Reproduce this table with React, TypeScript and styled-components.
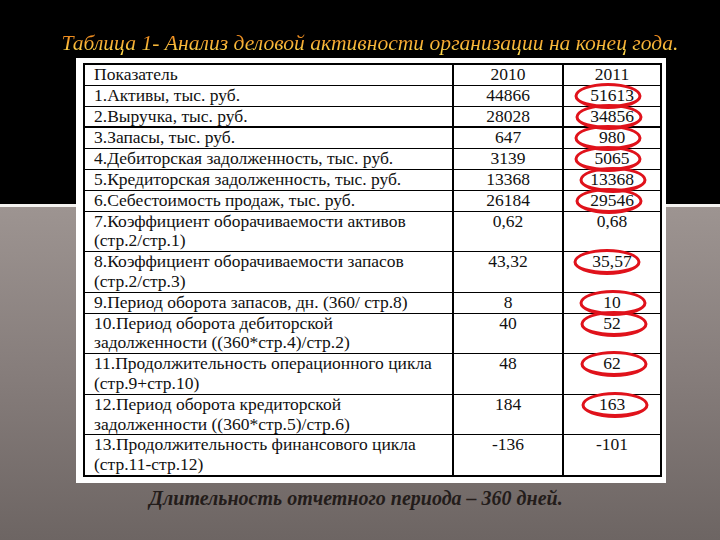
import React from 'react';
import styled, { createGlobalStyle } from 'styled-components';

type Row = { label: string[]; a: string; b: string; mark?: boolean; shift?: number; thick?: boolean };

const rows: Row[] = [
  { label: ['Показатель'], a: '2010', b: '2011' },
  { label: ['1.Активы, тыс. руб.'], a: '44866', b: '51613', mark: true, shift: -4 },
  { label: ['2.Выручка, тыс. руб.'], a: '28028', b: '34856', mark: true, shift: -3, thick: true },
  { label: ['3.Запасы, тыс. руб.'], a: '647', b: '980', mark: true, shift: -4 },
  { label: ['4.Дебиторская задолженность, тыс. руб.'], a: '3139', b: '5065', mark: true, shift: -4 },
  { label: ['5.Кредиторская задолженность, тыс. руб.'], a: '13368', b: '13368', mark: true, shift: 1 },
  { label: ['6.Себестоимость продаж, тыс. руб.'], a: '26184', b: '29546', mark: true, shift: -3 },
  { label: ['7.Коэффициент оборачиваемости активов', '(стр.2/стр.1)'], a: '0,62', b: '0,68' },
  { label: ['8.Коэффициент оборачиваемости  запасов', '(стр.2/стр.3)'], a: '43,32', b: '35,57', mark: true, shift: -5 },
  { label: ['9.Период оборота запасов, дн. (360/ стр.8)'], a: '8', b: '10', mark: true, shift: 1 },
  { label: ['10.Период оборота дебиторской', 'задолженности ((360*стр.4)/стр.2)'], a: '40', b: '52', mark: true, shift: 2 },
  { label: ['11.Продолжительность операционного цикла', '(стр.9+стр.10)'], a: '48', b: '62', mark: true, shift: 2 },
  { label: ['12.Период оборота кредиторской', 'задолженности ((360*стр.5)/стр.6)'], a: '184', b: '163', mark: true, shift: 3 },
  { label: ['13.Продолжительность финансового цикла', '(стр.11-стр.12)'], a: '-136', b: '-101' },
];

const GlobalStyle = createGlobalStyle`
  html, body {
    margin: 0;
    padding: 0;
    font-family: 'Liberation Serif', serif;
  }
`;

const Slide = styled.div`
  width: 720px;
  height: 540px;
  overflow: hidden;
  box-sizing: border-box;
  padding-top: 29px;
  display: flex;
  flex-direction: column;
  font-family: 'Liberation Serif', serif;
  background: linear-gradient(
    to bottom,
    #000 0,
    #000 204px,
    #f4f2f0 204px,
    #f4f2f0 207px,
    #9d9491 207px,
    #857c7a 380px,
    #6d6563 540px
  );
`;

const Title = styled.div`
  text-align: center;
  padding-left: 20px;
  font-family: 'Liberation Serif', serif;
  font-style: italic;
  font-size: 21.6px;
  line-height: 28px;
  background: linear-gradient(to bottom, #ee8a1e 25%, #ffd64c 80%);
  -webkit-background-clip: text;
  background-clip: text;
  color: transparent;
`;

const Card = styled.div`
  margin: 1px 0 0 76px;
  width: 590px;
  box-sizing: border-box;
  padding: 5px 6px 6px 7px;
  background: #fff;
`;

const Table = styled.table`
  width: 577px;
  border-collapse: collapse;
  table-layout: fixed;
  font-family: 'Liberation Serif', serif;
  font-size: 17.5px;
  color: #111;
  border: 2px solid #000;
`;

const Tr = styled.tr<{ $thick?: boolean }>`
  border-bottom: ${(p) => (p.$thick ? '2px' : '1px')} solid #000;
`;

const Label = styled.td`
  padding: 0 0 0 9px;
  line-height: 19.8px;
  height: 19.8px;
  vertical-align: top;
  border-right: 2px solid #000;
  white-space: nowrap;
  overflow: hidden;
`;

const Num = styled.td`
  position: relative;
  padding: 0;
  line-height: 19.8px;
  vertical-align: top;
  text-align: center;
  border-right: 2px solid #000;
`;

const Ring = styled.span<{ $shift: number }>`
  position: absolute;
  left: calc(50% + ${(p) => p.$shift}px);
  top: 10px;
  width: 67px;
  height: 26px;
  box-sizing: border-box;
  transform: translate(-50%, -50%);
  border: 3.5px solid #e0121b;
  border-bottom-width: 4px;
  border-radius: 50%;
  pointer-events: none;
`;

const Footer = styled.div`
  margin-top: 4px;
  text-align: center;
  padding-right: 8px;
  font-family: 'Liberation Serif', serif;
  font-style: italic;
  font-weight: bold;
  font-size: 20px;
  line-height: 23px;
  color: #231c1a;
`;

export default function App() {
  return (
    <Slide>
      <GlobalStyle />
      <Title>Таблица 1- Анализ деловой активности организации на конец года.</Title>
      <Card>
        <Table>
          <colgroup>
            <col style={{ width: 369 }} />
            <col style={{ width: 110 }} />
            <col style={{ width: 98 }} />
          </colgroup>
          <tbody>
            {rows.map((r, i) => (
              <Tr key={i} $thick={r.thick}>
                <Label>
                  {r.label.map((l, j) => (
                    <div key={j}>{l}</div>
                  ))}
                </Label>
                <Num>{r.a}</Num>
                <Num>
                  {r.b}
                  {r.mark && <Ring $shift={r.shift ?? 0} />}
                </Num>
              </Tr>
            ))}
          </tbody>
        </Table>
      </Card>
      <Footer>Длительность отчетного периода – 360 дней.</Footer>
    </Slide>
  );
}
